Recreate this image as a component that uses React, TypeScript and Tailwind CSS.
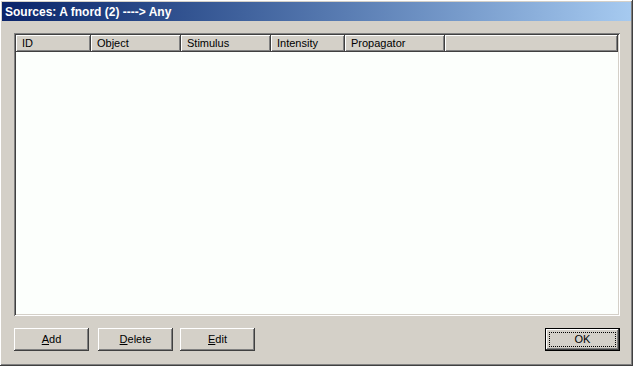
import React from 'react';

const columns = [
  { label: 'ID', width: 'w-[75px]' },
  { label: 'Object', width: 'w-[90px]' },
  { label: 'Stimulus', width: 'w-[90px]' },
  { label: 'Intensity', width: 'w-[74px]' },
  { label: 'Propagator', width: 'w-[100px]' },
];

const raised =
  'shadow-[inset_-1px_-1px_#404040,inset_1px_1px_#ffffff,inset_-2px_-2px_#808080,inset_2px_2px_#d4d0c8]';

function Btn({ hot, rest }: { hot: string; rest: string }) {
  return (
    <button
      className={`w-[75px] h-[23px] bg-[#d4d0c8] text-black text-[11px] flex items-center justify-center ${raised}`}
    >
      <span>
        <span className="underline underline-offset-1">{hot}</span>
        {rest}
      </span>
    </button>
  );
}

export default function App() {
  return (
    <div
      className={`w-[633px] h-[366px] bg-[#d4d0c8] p-[2px] flex flex-col font-['Liberation_Sans',Arial,sans-serif] ${raised}`}
    >
      {/* title bar */}
      <div className="h-[19px] bg-gradient-to-r from-[#0a246a] to-[#a6caf0] flex items-center px-[3px]">
        <span className="text-white font-bold text-[12px] leading-none pt-px">Sources: A fnord (2) ----&gt; Any</span>
      </div>

      <div className="flex-1 flex flex-col pl-[12px] pr-[11px] pt-[12px] pb-[13px]">
        {/* list view */}
        <div className="flex-1 bg-white p-[2px] shadow-[inset_1px_1px_#808080,inset_-1px_-1px_#ffffff,inset_2px_2px_#404040,inset_-2px_-2px_#d4d0c8] flex flex-col">
          <div className="flex h-[17px]">
            {columns.map((c) => (
              <div
                key={c.label}
                className={`${c.width} bg-[#d4d0c8] text-[11px] text-black flex items-center pl-[6px] ${raised}`}
              >
                {c.label}
              </div>
            ))}
            <div className={`flex-1 bg-[#d4d0c8] ${raised}`} />
          </div>
          <div className="flex-1 bg-[#fcfffc]" />
        </div>

        {/* buttons */}
        <div className="mt-[12px] flex items-center">
          <Btn hot="A" rest="dd" />
          <div className="w-[9px]" />
          <Btn hot="D" rest="elete" />
          <div className="w-[7px]" />
          <Btn hot="E" rest="dit" />
          <div className="flex-1" />
          <button className="w-[75px] h-[23px] bg-[#d4d0c8] border border-black text-[11px] text-black p-0">
            <div className="w-full h-full p-[3px] shadow-[inset_-1px_-1px_#404040,inset_1px_1px_#ffffff,inset_-2px_-2px_#808080]">
              <div className="w-full h-full border border-dotted border-black flex items-center justify-center">
                OK
              </div>
            </div>
          </button>
        </div>
      </div>
    </div>
  );
}
